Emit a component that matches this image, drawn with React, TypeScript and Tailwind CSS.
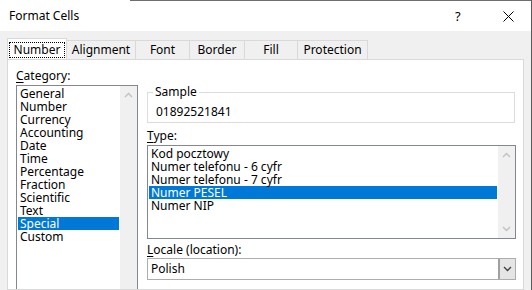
import React from "react";

const categories = [
  "General",
  "Number",
  "Currency",
  "Accounting",
  "Date",
  "Time",
  "Percentage",
  "Fraction",
  "Scientific",
  "Text",
  "Special",
  "Custom",
];

const types = [
  "Kod pocztowy",
  "Numer telefonu - 6 cyfr",
  "Numer telefonu - 7 cyfr",
  "Numer PESEL",
  "Numer NIP",
];

const tabs = ["Alignment", "Font", "Border", "Fill", "Protection"];
const tabWidths = ["w-[69px]", "w-[54px]", "w-[55px]", "w-[53px]", "w-[70px]"];

const Chevron = ({ up, color }: { up?: boolean; color: string }) => (
  <svg width="9" height="6" viewBox="0 0 9 6">
    <path
      d={up ? "M1 5 L4.5 1.5 L8 5" : "M1 1 L4.5 4.5 L8 1"}
      fill="none"
      stroke={color}
      strokeWidth="1.3"
    />
  </svg>
);

// scroll bar shared by both list boxes
const ScrollBar = () => (
  <div className="w-[17px] bg-[#f0f0f0] flex flex-col justify-between items-center py-[6px]">
    <Chevron up color="#c0c0c0" />
    <Chevron color="#c0c0c0" />
  </div>
);

const ListBox = ({
  items,
  selected,
  className,
}: {
  items: string[];
  selected: string;
  className: string;
}) => (
  <div className={`border border-[#828790] bg-white flex shrink-0 ${className}`}>
    <div className="flex-1 p-[1px]">
      {items.map((item) => (
        <div
          key={item}
          className={`h-[13px] leading-[13px] pl-[2px] whitespace-nowrap ${
            item === selected ? "bg-[#0078d7] text-white" : "text-black"
          }`}
        >
          {item}
        </div>
      ))}
    </div>
    <ScrollBar />
  </div>
);

export default function App() {
  return (
    <div className="w-[532px] h-[290px] overflow-hidden flex flex-col bg-[#f0f0f0] border-r border-[#5a5a5a] text-[12px] text-black font-['Noto_Sans','DejaVu_Sans',sans-serif]">
      {/* title bar */}
      <div className="h-[31px] bg-white flex flex-col shrink-0">
        <div className="h-[1px] ml-[130px] bg-[#6e6e6e]" />
        <div className="flex-1 flex items-center">
          <div className="pl-[9px] flex-1 leading-[16px]">Format Cells</div>
          <div className="w-[14px] text-[13px] leading-[16px] mr-[34px]">?</div>
          <svg width="11" height="11" viewBox="0 0 11 11" className="mr-[17px]">
            <path d="M0.5 0.5 L10.5 10.5 M10.5 0.5 L0.5 10.5" stroke="#000" strokeWidth="1" />
          </svg>
        </div>
      </div>

      {/* tabs */}
      <div className="flex items-end h-[21px] mt-[7px] px-[7px] shrink-0">
        <div className="w-[60px] h-[21px] bg-white border border-b-0 border-[#d9d9d9] flex items-center justify-center pt-[1px]">
          <span className="border border-dotted border-black px-[4px] leading-[14px]">Number</span>
        </div>
        {tabs.map((t, i) => (
          <div
            key={t}
            className={`${tabWidths[i]} h-[19px] border border-b-0 border-l-0 border-[#d9d9d9] flex items-center justify-center leading-[16px]`}
          >
            {t}
          </div>
        ))}
      </div>

      {/* panel */}
      <div className="flex-1 mx-[7px] bg-white border border-[#d9d9d9] flex pl-[8px] pr-[7px] gap-[9px] min-h-0 overflow-hidden">
        <div className="w-[122px] flex flex-col pt-[8px]">
          <div className="leading-[16px] mb-[1px]">
            <u className="underline-offset-2">C</u>ategory:
          </div>
          <ListBox items={categories} selected="Special" className="h-[240px]" />
        </div>

        <div className="flex-1 flex flex-col pt-[32px]">
          <div className="relative border border-[#dcdcdc] h-[31px] mr-[1px] pl-[8px] pt-[11px] leading-[16px]">
            <span className="absolute -top-[9px] left-[5px] bg-white px-[2px] leading-[16px]">Sample</span>
            01892521841
          </div>
          <div className="leading-[16px] mt-[5px] mb-[1px]">
            <u className="underline-offset-2">T</u>ype:
          </div>
          <ListBox items={types} selected="Numer PESEL" className="h-[94px]" />
          <div className="leading-[16px] mt-[3px]">
            <u className="underline-offset-2">L</u>ocale (location):
          </div>
          <div className="h-[22px] border border-[#adadad] bg-white flex">
            <div className="flex-1 pl-[3px] leading-[20px]">Polish</div>
            <div className="w-[17px] bg-[#e5e5e5] border-l-2 border-[#a0a0a0] flex items-center justify-center">
              <Chevron color="#404040" />
            </div>
          </div>
        </div>
      </div>
    </div>
  );
}
